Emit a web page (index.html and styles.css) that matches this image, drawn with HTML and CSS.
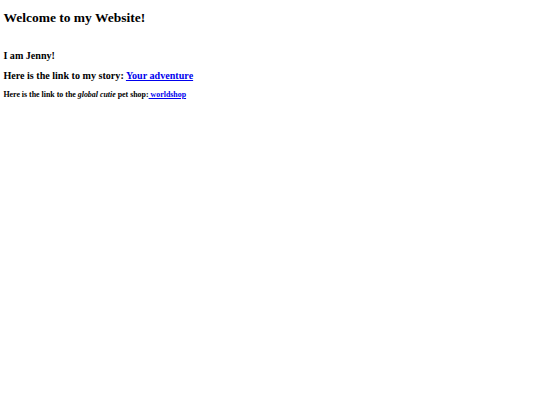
FILE: index.html
```html
<!DOCTYPE html>
<html>
<head>
<meta charset="utf-8">
<link rel="stylesheet" href="styles.css">
</head>
<body>
<h1 class="title">Welcome to my Website!</h1>
<h2 class="intro">I am Jenny!</h2>
<h2 class="story">Here is the link to my story: <a class="link" href="#">Your adventure</a></h2>
<h3 class="shop">Here is the link to the <i>global cutie</i> pet shop:<a class="link" href="#"> worldshop</a></h3>
</body>
</html>
```
FILE: styles.css
```css
body {
  margin: 3.4px;
  font-family: "Liberation Serif", "Times New Roman", serif;
  color: #000;
  background: #fff;
}
.title {
  font-size: 13.5px;
  margin: 6.3px 0 0 0;
}
.intro {
  font-size: 10.1px;
  margin: 24.5px 0 0 0;
}
.story {
  font-size: 10.1px;
  margin: 9.2px 0 0 0;
}
.shop {
  font-size: 7.9px;
  margin: 8.2px 0 0 0;
}
.link {
  color: #0000ee;
}
```
